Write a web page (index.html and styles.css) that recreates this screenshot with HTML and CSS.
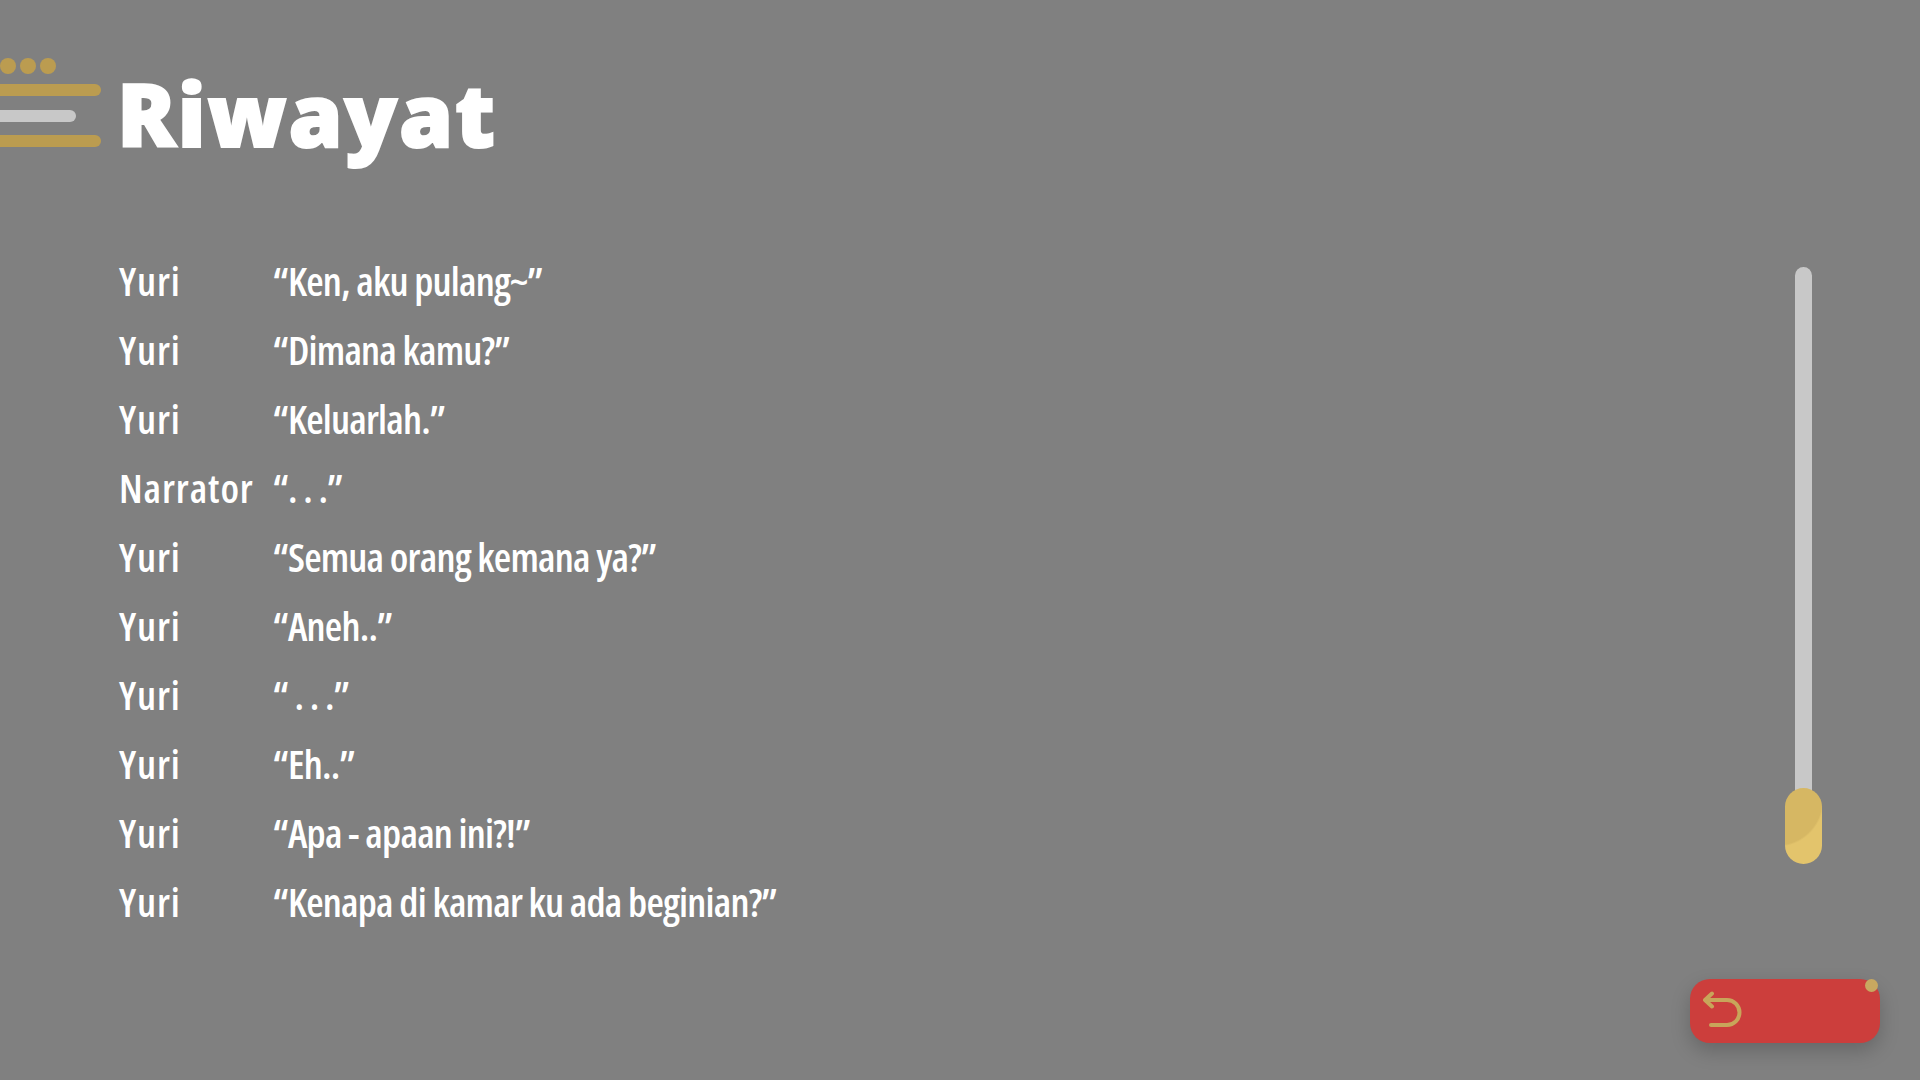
FILE: index.html
```html
<!DOCTYPE html>
<html lang="en">
<head>
    <meta charset="UTF-8">
    <title>Riwayat</title>
    <link rel="stylesheet" href="styles.css">
</head>
<body>
    <header class="header">
        <svg class="menu-icon" width="101" height="89" viewBox="0 0 101 89">
            <circle cx="8" cy="8" r="8" fill="#bb9c50"/>
            <circle cx="28" cy="8" r="8" fill="#bb9c50"/>
            <circle cx="48" cy="8" r="8" fill="#bb9c50"/>
            <path d="M-8 32H95" stroke="#bb9c50" stroke-width="12" stroke-linecap="round"/>
            <path d="M-8 58H70" stroke="#c8c8c8" stroke-width="12" stroke-linecap="round"/>
            <path d="M-8 83H95" stroke="#bb9c50" stroke-width="12" stroke-linecap="round"/>
        </svg>
        <h1 class="title">Riwayat</h1>
    </header>

    <main class="content">
        <ul class="history">
            <li class="entry"><span class="who">Yuri</span><span class="what">“Ken, aku pulang~”</span></li>
            <li class="entry"><span class="who">Yuri</span><span class="what">“Dimana kamu?”</span></li>
            <li class="entry"><span class="who">Yuri</span><span class="what">“Keluarlah.”</span></li>
            <li class="entry"><span class="who">Narrator</span><span class="what">“. . .”</span></li>
            <li class="entry"><span class="who">Yuri</span><span class="what">“Semua orang kemana ya?”</span></li>
            <li class="entry"><span class="who">Yuri</span><span class="what">“Aneh..”</span></li>
            <li class="entry"><span class="who">Yuri</span><span class="what">“ . . .”</span></li>
            <li class="entry"><span class="who">Yuri</span><span class="what">“Eh..”</span></li>
            <li class="entry"><span class="who">Yuri</span><span class="what">“Apa - apaan ini?!”</span></li>
            <li class="entry"><span class="who">Yuri</span><span class="what">“Kenapa di kamar ku ada beginian?”</span></li>
        </ul>
        <div class="scrollbar">
            <div class="track"></div>
            <div class="thumb"></div>
        </div>
    </main>

    <footer class="footer">
        <button class="back" type="button" aria-label="Kembali">
            <svg width="44" height="40" viewBox="0 0 44 40" fill="none">
                <path d="M9 2.500L2 9L9 15.500M2 9H24A12.500 12.500 0 0 1 24 34H8" stroke="#c8a55a" stroke-width="4" stroke-linecap="round" stroke-linejoin="round"/>
            </svg>
            <span class="back-dot"></span>
        </button>
    </footer>
</body>
</html>
```

FILE: styles.css
```css
* {
    box-sizing: border-box;
}
html, body {
    margin: 0;
    height: 100%;
}
body {
    display: flex;
    flex-direction: column;
    height: 1080px;
    overflow: hidden;
    background-color: #808080;
    color: #fff;
    font-family: 'Open Sans', 'Noto Sans', sans-serif;
}
.header {
    display: flex;
    align-items: flex-start;
    gap: 16px;
    height: 190px;
    padding-top: 55px;
}
.menu-icon {
    flex: none;
    margin-top: 3px;
}
.title {
    margin: 0;
    font-family: 'Noto Sans', sans-serif;
    font-size: 87px;
    font-weight: 900;
    line-height: 116px;
    letter-spacing: 1.7px;
    -webkit-text-stroke: 2px #fff;
}
.content {
    display: flex;
    justify-content: space-between;
    height: 789px;
    padding: 58px 98px 0 119px;
}
.history {
    margin: 0;
    padding: 0;
    list-style: none;
}
.entry {
    display: flex;
    height: 69px;
    padding-bottom: 4px;
    align-items: center;
    font-size: 40px;
    font-weight: 600;
    font-stretch: 75%;
    letter-spacing: -0.8px;
}
.who {
    width: 154px;
    letter-spacing: 0.9px;
}
.scrollbar {
    position: relative;
    width: 37px;
    height: 597px;
    margin-top: 19px;
}
.track {
    width: 17px;
    height: 570px;
    margin-left: 10px;
    border-radius: 9px;
    background-color: #c8c8c8;
}
.thumb {
    position: absolute;
    left: 0;
    bottom: 0;
    width: 37px;
    height: 76px;
    border-radius: 19px;
    background: radial-gradient(circle at -8px 12px, #d6b763 0 45px, #e3c46c 47px);
}
.footer {
    display: flex;
    justify-content: flex-end;
    padding: 0 40px;
}
.back {
    position: relative;
    display: flex;
    align-items: center;
    width: 190px;
    height: 64px;
    padding: 0 0 0 13px;
    border: none;
    border-radius: 20px;
    background-color: #cc3e3c;
    box-shadow: 0 8px 20px rgba(0, 0, 0, 0.2);
}
.back-dot {
    position: absolute;
    top: 0;
    right: 2px;
    width: 13px;
    height: 13px;
    border-radius: 50%;
    background-color: #c8a860;
}
```
